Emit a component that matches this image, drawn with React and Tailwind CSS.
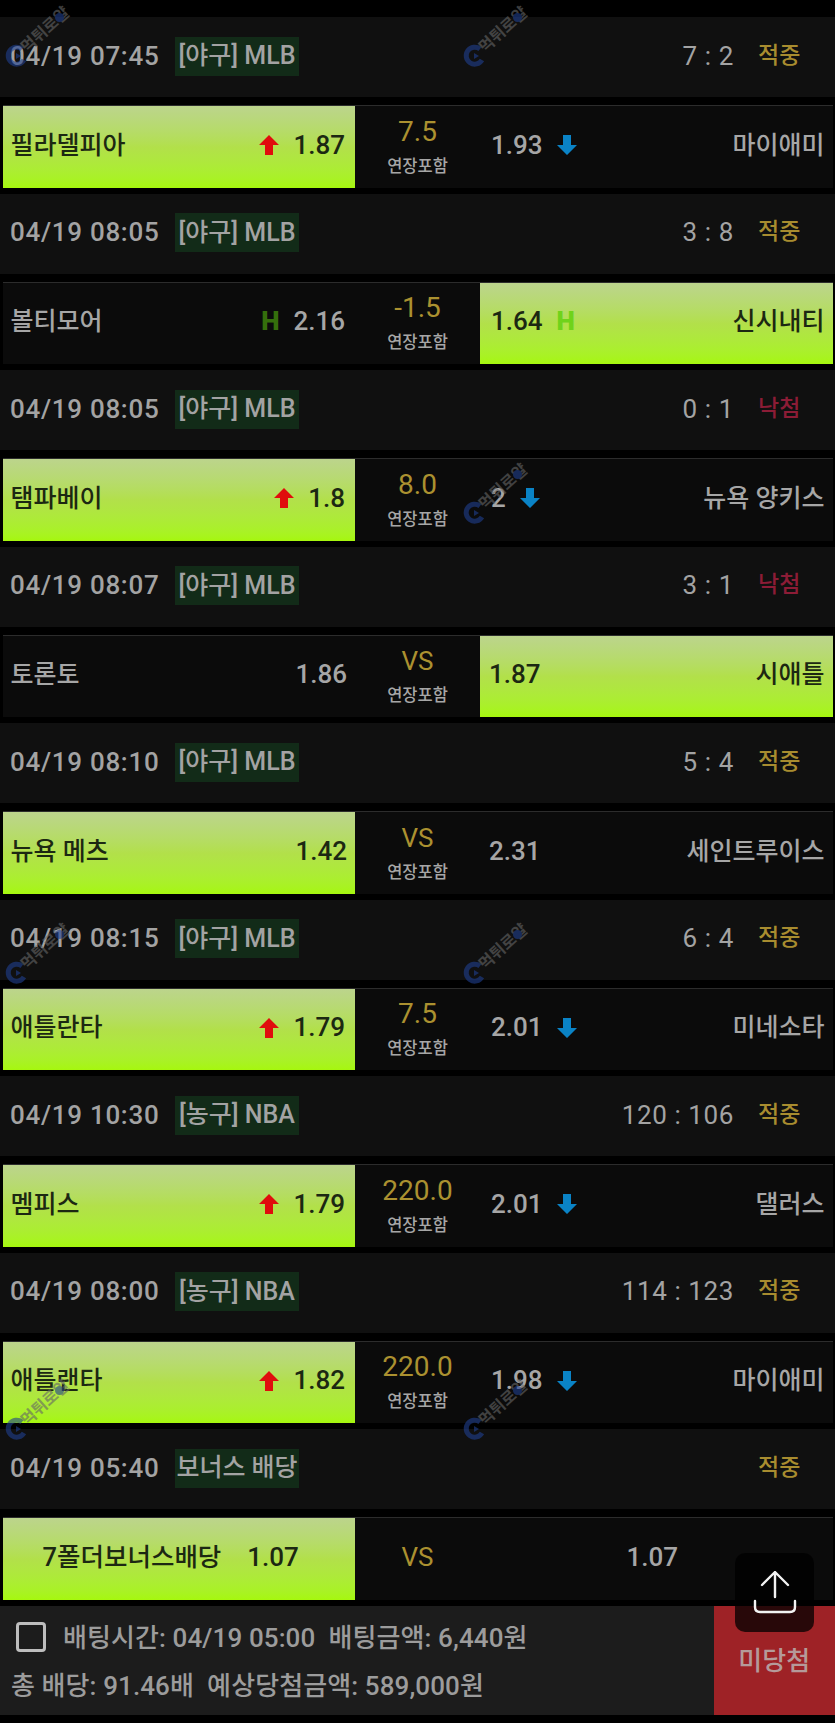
const games = [
  { time: "04/19 07:45", league: "[야구] MLB", score: "7 : 2", result: "적중", home: "필라델피아", homeOdds: "1.87", line: "7.5", awayOdds: "1.93", away: "마이애미", pick: "home", mark: "arrow" },
  { time: "04/19 08:05", league: "[야구] MLB", score: "3 : 8", result: "적중", home: "볼티모어", homeOdds: "2.16", line: "-1.5", awayOdds: "1.64", away: "신시내티", pick: "away", mark: "h" },
  { time: "04/19 08:05", league: "[야구] MLB", score: "0 : 1", result: "낙첨", home: "탬파베이", homeOdds: "1.8", line: "8.0", awayOdds: "2", away: "뉴욕 양키스", pick: "home", mark: "arrow" },
  { time: "04/19 08:07", league: "[야구] MLB", score: "3 : 1", result: "낙첨", home: "토론토", homeOdds: "1.86", line: "VS", awayOdds: "1.87", away: "시애틀", pick: "away" },
  { time: "04/19 08:10", league: "[야구] MLB", score: "5 : 4", result: "적중", home: "뉴욕 메츠", homeOdds: "1.42", line: "VS", awayOdds: "2.31", away: "세인트루이스", pick: "home" },
  { time: "04/19 08:15", league: "[야구] MLB", score: "6 : 4", result: "적중", home: "애틀란타", homeOdds: "1.79", line: "7.5", awayOdds: "2.01", away: "미네소타", pick: "home", mark: "arrow" },
  { time: "04/19 10:30", league: "[농구] NBA", score: "120 : 106", result: "적중", home: "멤피스", homeOdds: "1.79", line: "220.0", awayOdds: "2.01", away: "댈러스", pick: "home", mark: "arrow" },
  { time: "04/19 08:00", league: "[농구] NBA", score: "114 : 123", result: "적중", home: "애틀랜타", homeOdds: "1.82", line: "220.0", awayOdds: "1.98", away: "마이애미", pick: "home", mark: "arrow" },
];

const green = "bg-gradient-to-b from-[#bcd48c] via-[#b2e04a] to-[#a6f70c] text-[#1c2812]";

function UpArrow() {
  return (
    <svg width="20" height="20" viewBox="0 0 20 20" className="shrink-0">
      <path d="M10 0 L20 10 L14 10 L14 20 L6 20 L6 10 L0 10 Z" fill="#e00d0d" />
    </svg>
  );
}

function DownArrow() {
  return (
    <svg width="20" height="20" viewBox="0 0 20 20" className="shrink-0">
      <path d="M6 0 L14 0 L14 10 L20 10 L10 20 L0 10 L6 10 Z" fill="#0a83c6" />
    </svg>
  );
}

function Info({ time, league, score, result }) {
  return (
    <div className="flex items-center h-[80px] pb-[2px] bg-[#101010] text-[#a3a3a3]">
      <div className="w-[175px] pl-[10px] text-[26px] font-medium tracking-[0.7px] whitespace-nowrap">{time}</div>
      <div className="flex items-center justify-center h-[39px] w-[124px] bg-[#122b18] text-[25px] font-medium whitespace-nowrap">{league}</div>
      <div className="ml-auto text-[26px] tracking-[0.6px] whitespace-pre">{score}</div>
      <div className={"w-[101px] pl-[24px] text-[23px] font-medium " + (result === "낙첨" ? "text-[#8c1c36]" : "text-[#a88c2f]")}>{result}</div>
    </div>
  );
}

function Game({ home, homeOdds, line, awayOdds, away, pick, mark }) {
  const homeOn = pick === "home";
  const awayOn = pick === "away";
  return (
    <div className="flex h-[82.5px] mx-[2.5px] bg-[#0b0b0b] border-t border-[#2c2c2c] text-[26px] text-[#a6a6a6]">
      <div className={"flex items-center w-[352.5px] pl-[8px] pb-[3px] " + (mark ? "pr-[10px] " : "pr-[8px] ") + (homeOn ? green : "")}>
        <span className="font-medium text-[25px] whitespace-nowrap">{home}</span>
        <div className="ml-auto flex items-center gap-[14px] font-medium">
          {mark === "arrow" && <UpArrow />}
          {mark === "h" && <span className="font-black text-[#356f0c] text-[26px]">H</span>}
          <span>{homeOdds}</span>
        </div>
      </div>
      <div className="flex flex-col items-center justify-center w-[125px] pt-[2px]">
        <span className={"leading-[34px] text-[#ab9130] " + (line === "VS" ? "text-[26px]" : "text-[28px]")}>{line}</span>
        <span className="mt-[4px] text-[16.5px] leading-[28px] font-medium text-[#a6a6a6]">연장포함</span>
      </div>
      <div className={"flex items-center flex-1 pr-[8px] pb-[3px] " + (mark ? "pl-[11px] " : "pl-[9px] ") + (awayOn ? green : "")}>
        <div className="flex items-center gap-[14px] font-medium">
          <span>{awayOdds}</span>
          {mark === "arrow" && <DownArrow />}
          {mark === "h" && <span className={"font-black text-[26px] " + (awayOn ? "text-[#6fd31a]" : "text-[#356f0c]")}>H</span>}
        </div>
        <span className="ml-auto font-medium text-[25px] whitespace-nowrap">{away}</span>
      </div>
    </div>
  );
}

function BonusGame() {
  return (
    <div className="flex h-[82.5px] mx-[2.5px] bg-[#0b0b0b] border-t border-[#2c2c2c] text-[26px] font-medium text-[#a6a6a6]">
      <div className={"flex items-center justify-center gap-[26px] w-[352.5px] pr-[16px] pb-[3px] " + green}>
        <span className="text-[25.5px] whitespace-nowrap">7폴더보너스배당</span>
        <span>1.07</span>
      </div>
      <div className="flex items-center justify-center w-[125px] pb-[3px] font-normal text-[#ab9130]">VS</div>
      <div className="flex items-center justify-center flex-1 pr-[8px] pb-[3px]">1.07</div>
    </div>
  );
}

// site watermark repeated over the list
function Watermark({ className }) {
  return (
    <div className={"absolute w-[72px] h-[60px] pointer-events-none opacity-60 " + className}>
      <svg width="24" height="24" viewBox="0 0 24 24" className="absolute left-0 bottom-0">
        <path d="M17 5 A8.5 8.5 0 1 0 19 16" fill="none" stroke="#20408f" strokeWidth="5" />
        <path d="M11 9 L16 12 L11 15 Z" fill="#20408f" />
      </svg>
      <span className="absolute left-[11px] top-[14px] text-[16px] leading-none font-bold text-[#666666] -rotate-[42deg] whitespace-nowrap">먹튀로얄</span>
      <span className="absolute left-[50px] top-[5px] w-[9px] h-[9px] rounded-full bg-[#20408f]" />
    </div>
  );
}

export default function App() {
  return (
    <div className="relative h-[1723px] overflow-hidden bg-black pt-[17px] font-['Roboto','Noto_Sans_CJK_KR',sans-serif]">
      <div className="flex flex-col">
        {games.map((g, i) => (
          <div key={i}>
            <Info time={g.time} league={g.league} score={g.score} result={g.result} />
            <div className="mt-[8px] mb-[6px]">
              <Game {...g} />
            </div>
          </div>
        ))}
        <Info time="04/19 05:40" league="보너스 배당" score="" result="적중" />
        <div className="mt-[8px] mb-[6px]">
          <BonusGame />
        </div>
      </div>

      <div className="flex h-[109px] bg-[#1c1c1c] text-[#9c9c9c]">
        <div className="flex flex-col flex-1 pl-[11px] pt-[16px] text-[26px] font-medium tracking-[0.1px]">
          <div className="flex items-center h-[30px] leading-[34px] whitespace-nowrap">
            <span className="w-[30px] h-[30px] ml-[5px] mr-[17px] border-[3px] border-[#bdbdbd] rounded-[4px]" />
            <span className="pt-[3px]">배팅시간: 04/19 05:00 &nbsp;배팅금액: 6,440원</span>
          </div>
          <div className="mt-[19px] leading-[30px] whitespace-nowrap">총 배당: 91.46배 &nbsp;예상당첨금액: 589,000원</div>
        </div>
        <div className="flex items-center justify-center w-[121.5px] pt-[2px] bg-[#9e2226] text-[26px] font-medium text-[#b59a9a]">미당첨</div>
      </div>

      <Watermark className="left-[5px] top-[8px]" />
      <Watermark className="left-[463px] top-[8px]" />
      <Watermark className="left-[463px] top-[465px]" />
      <Watermark className="left-[5px] top-[925px]" />
      <Watermark className="left-[463px] top-[925px]" />
      <Watermark className="left-[5px] top-[1381px]" />
      <Watermark className="left-[463px] top-[1381px]" />

      <button className="absolute left-[735px] top-[1553px] flex items-center justify-center w-[79px] h-[79px] rounded-[10px] bg-black/75">
        <svg width="46" height="44" viewBox="0 0 46 44" fill="none" stroke="#f2f2f2" strokeWidth="2.4" strokeLinecap="round" strokeLinejoin="round">
          <path d="M23 26 L23 1 M10 14 L23 1 L36 14" />
          <path d="M3 30 L3 36 Q3 41 8 41 L38 41 Q43 41 43 36 L43 30" />
        </svg>
      </button>
    </div>
  );
}
